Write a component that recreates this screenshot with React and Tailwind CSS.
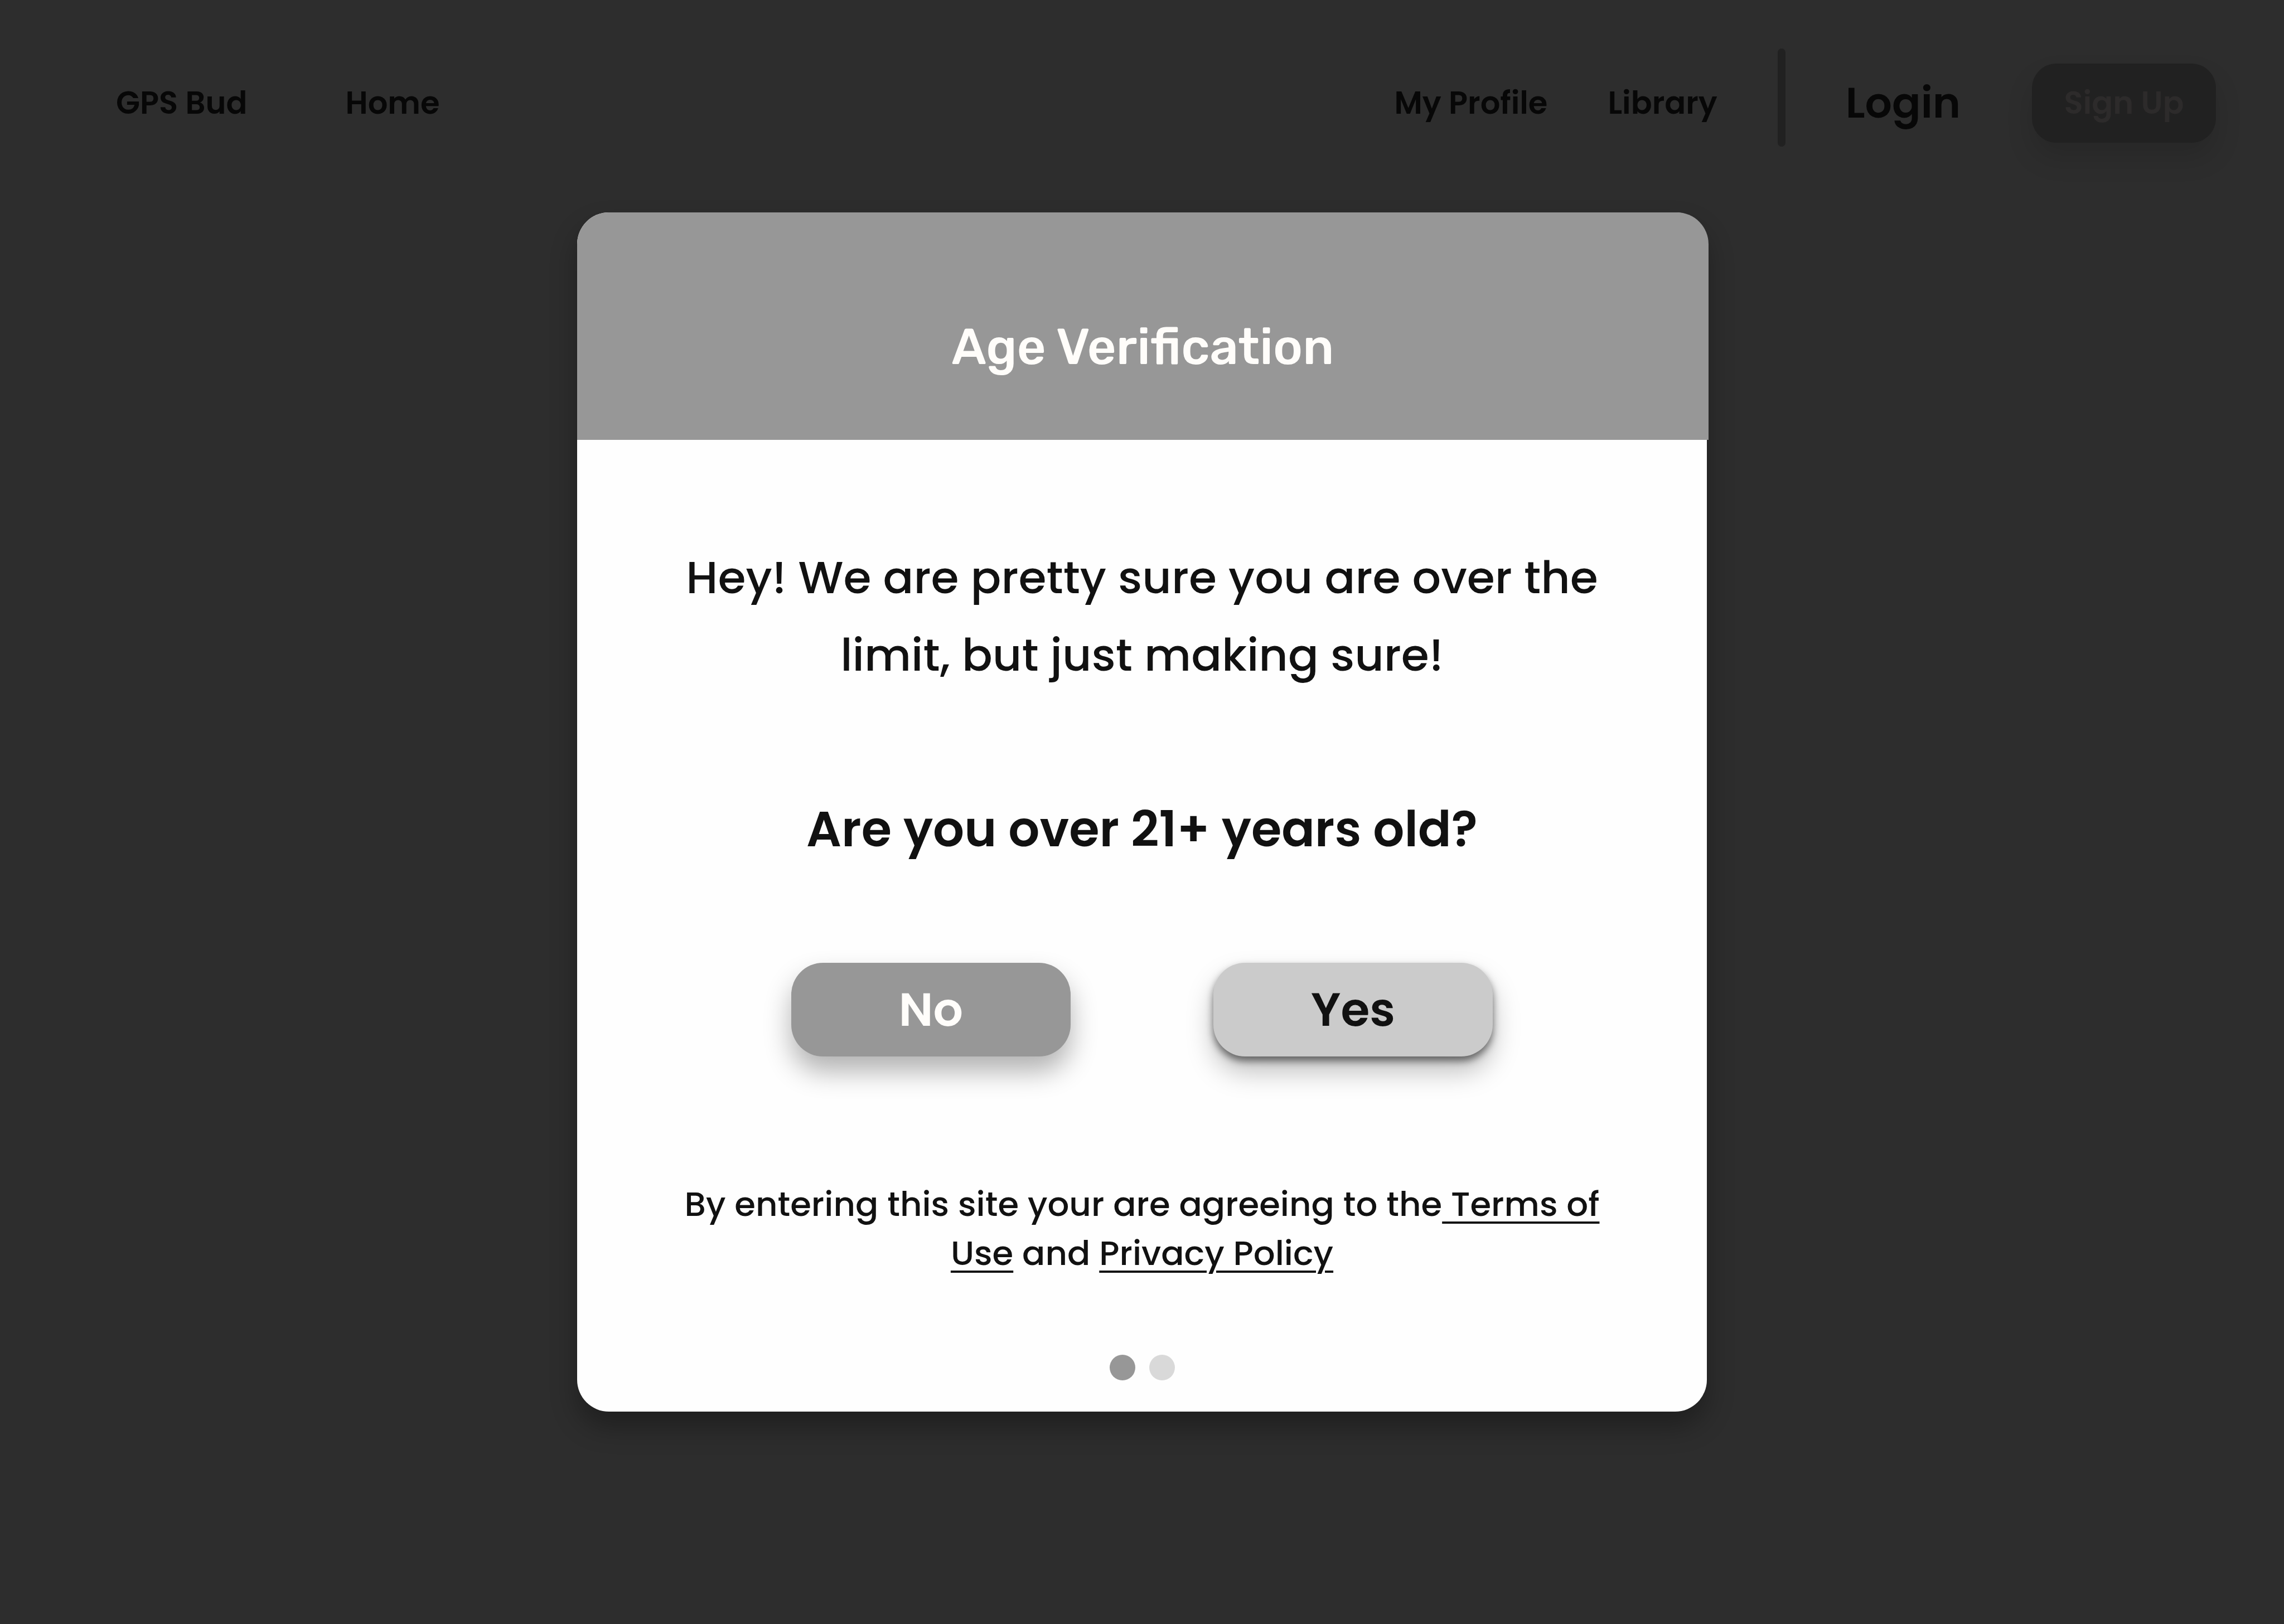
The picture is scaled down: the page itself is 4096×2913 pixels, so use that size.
import React from "react";

const page =
  "flex min-h-screen flex-col bg-[#2d2d2d] font-[Poppins,Inter,sans-serif] text-[#111111]";
const navLink = "text-[56px] font-semibold leading-none";
const choice =
  "flex h-[168px] w-[501px] items-center justify-center rounded-[57px] text-[84px] font-semibold leading-none";
const legalLink = "underline decoration-4 underline-offset-[10px]";

function NavBar() {
  return (
    <header className="flex items-center justify-between pt-[87px] pr-[122px] pl-[208px] text-[#070707]">
      <nav aria-label="Main" className="flex items-center gap-44">
        <a href="#top" className={navLink}>GPS Bud</a>
        <a href="#home" className={navLink}>Home</a>
      </nav>
      <nav aria-label="Account" className="flex items-center gap-[108px]">
        <a href="#profile" className={navLink}>My Profile</a>
        <a href="#library" className={navLink}>Library</a>
        <div className="mb-5 h-44 w-3.5 rounded-full bg-[#212121]" />
        <a href="#login" className="text-[76px] font-semibold leading-none">Login</a>
        <button
          type="button"
          className="ml-5 h-[142px] w-[330px] rounded-[44px] bg-[#212121] text-[56px] leading-none font-semibold text-[#2d2b2b] shadow-[0_27px_48px_rgba(0,0,0,0.13)]"
        >
          Sign Up
        </button>
      </nav>
    </header>
  );
}

function AgeDialog() {
  return (
    <section
      role="dialog"
      aria-labelledby="age-title"
      className="mx-auto mt-[98px] mb-20 w-full max-w-[2026px] rounded-[57px] bg-[#fefefe] text-center shadow-[0_27px_48px_rgba(0,0,0,0.3)]"
    >
      <div className="-mr-[3px] rounded-t-[57px] bg-[#979797] pt-[197px] pb-[121px]">
        <h1
          id="age-title"
          className="font-[Rubik,Inter,sans-serif] text-[90px] font-medium leading-none text-[#fffdfa]"
        >
          Age Verification
        </h1>
      </div>
      <div className="flex flex-col items-center px-[188px] pt-[177px] pb-14">
        <p className="text-[81px] font-medium leading-[139px]">
          Hey! We are pretty sure you are over the limit, but just making sure!
        </p>
        <h2 className="mt-[200px] text-[88px] font-semibold leading-none">
          Are you over 21+ years old?
        </h2>
        <div className="mt-[195px] flex gap-64">
          <button
            type="button"
            className={`${choice} bg-[#979797] text-[#fffdfa] shadow-[0_27px_48px_rgba(0,0,0,0.3)]`}
          >
            No
          </button>
          <button
            type="button"
            className={`${choice} bg-[#cbcbcb] shadow-[0_27px_48px_rgba(0,0,0,0.25),0_8px_14px_rgba(0,0,0,0.5)]`}
          >
            Yes
          </button>
        </div>
        <p className="mt-[221px] text-[61px] font-medium leading-[88px]">
          By entering this site your are agreeing to the
          <a href="#terms" className={legalLink}> Terms of Use</a> and{" "}
          <a href="#privacy" className={legalLink}>Privacy Policy</a>
        </p>
        <div className="mt-[138px] flex gap-[25px]" aria-label="Step 1 of 2">
          <span className="size-[46px] rounded-full bg-[#979797]" />
          <span className="size-[46px] rounded-full bg-[#d9d9d9]" />
        </div>
      </div>
    </section>
  );
}

export default function App() {
  return (
    <div className={page}>
      <NavBar />
      <main>
        <AgeDialog />
      </main>
    </div>
  );
}
